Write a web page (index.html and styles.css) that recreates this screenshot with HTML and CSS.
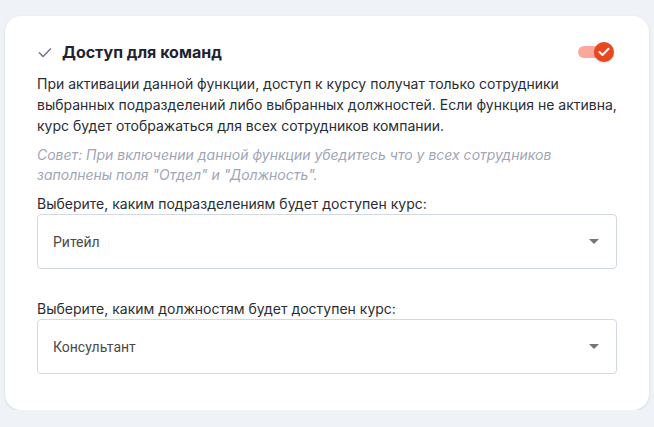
FILE: index.html
```html
<!DOCTYPE html>
<html lang="ru">
<head>
    <meta charset="UTF-8">
    <meta name="viewport" content="width=device-width, initial-scale=1.0">
    <title>Доступ для команд</title>
    <link rel="stylesheet" href="styles.css">
</head>
<body>
    <div class="card">
        <div class="card-head">
            <div class="title">
                <svg class="title-check" width="14" height="11" viewBox="0 0 14 11">
                    <path d="M1 5.5 L5 9.5 L13 1.5" fill="none" stroke="#6b7180" stroke-width="1.4"/>
                </svg>
                <span>Доступ для команд</span>
            </div>
            <div class="toggle">
                <div class="toggle-track"></div>
                <div class="toggle-knob">
                    <svg width="12" height="10" viewBox="0 0 12 10">
                        <path d="M1.5 5 L4.5 8 L10.5 1.8" fill="none" stroke="#fff" stroke-width="2" stroke-linecap="round" stroke-linejoin="round"/>
                    </svg>
                </div>
            </div>
        </div>

        <p class="desc">При активации данной функции, доступ к курсу получат только сотрудники выбранных подразделений либо выбранных должностей. Если функция не активна, курс будет отображаться для всех сотрудников компании.</p>
        <p class="hint">Совет: При включении данной функции убедитесь что у всех сотрудников заполнены поля "Отдел" и "Должность".</p>

        <div class="field">
            <div class="field-label">Выберите, каким подразделениям будет доступен курс:</div>
            <div class="select">
                <span>Ритейл</span>
                <span class="select-arrow"></span>
            </div>
        </div>

        <div class="field field-second">
            <div class="field-label">Выберите, каким должностям будет доступен курс:</div>
            <div class="select">
                <span>Консультант</span>
                <span class="select-arrow"></span>
            </div>
        </div>
    </div>
</body>
</html>
```

FILE: styles.css
```css
body {
    margin: 0;
    padding: 16px 5px 0 5px;
    background-color: #eff2f7;
    font-family: Inter, "Noto Sans", sans-serif;
    color: #23262f;
}
.card {
    width: 644px;
    box-sizing: border-box;
    background-color: #fff;
    border-radius: 16px;
    box-shadow: 0 1px 3px rgba(30, 40, 70, 0.12);
    padding: 24px 32px 36px 32px;
}
.card-head {
    display: flex;
    align-items: center;
    justify-content: space-between;
    height: 24px;
}
.title {
    display: flex;
    align-items: center;
    font-size: 16px;
    font-weight: 700;
    color: #1f2330;
}
.title-check {
    margin: 0 10px 0 1px;
}
.toggle {
    position: relative;
    width: 36px;
    height: 20px;
    margin-right: 3px;
}
.toggle-track {
    position: absolute;
    left: 0;
    top: 4px;
    width: 30px;
    height: 12px;
    border-radius: 6px;
    background-color: #ffa69c;
}
.toggle-knob {
    position: absolute;
    right: 0;
    top: 0;
    width: 20px;
    height: 20px;
    border-radius: 50%;
    background-color: #e8471f;
    display: flex;
    align-items: center;
    justify-content: center;
    box-shadow: 0 1px 2px rgba(0, 0, 0, 0.2);
}
.desc {
    margin: 9px 0 0 0;
    font-size: 14px;
    line-height: 21px;
    color: #2a2d36;
}
.hint {
    margin: 9px 0 0 0;
    font-size: 14px;
    line-height: 20px;
    font-style: italic;
    color: #a0a6b8;
}
.field {
    margin-top: 9px;
}
.field-second {
    margin-top: 30px;
}
.field-label {
    font-size: 14px;
    line-height: 20px;
    color: #2a2d36;
}
.select {
    height: 55px;
    box-sizing: border-box;
    border: 1px solid #d3d9e3;
    border-radius: 4px;
    display: flex;
    align-items: center;
    justify-content: space-between;
    padding: 0 17px 0 15px;
    font-family: Roboto, sans-serif;
    font-size: 14px;
    color: #4a4a4a;
}
.select-arrow {
    width: 0;
    height: 0;
    border-left: 5px solid transparent;
    border-right: 5px solid transparent;
    border-top: 5px solid #757575;
}
```
